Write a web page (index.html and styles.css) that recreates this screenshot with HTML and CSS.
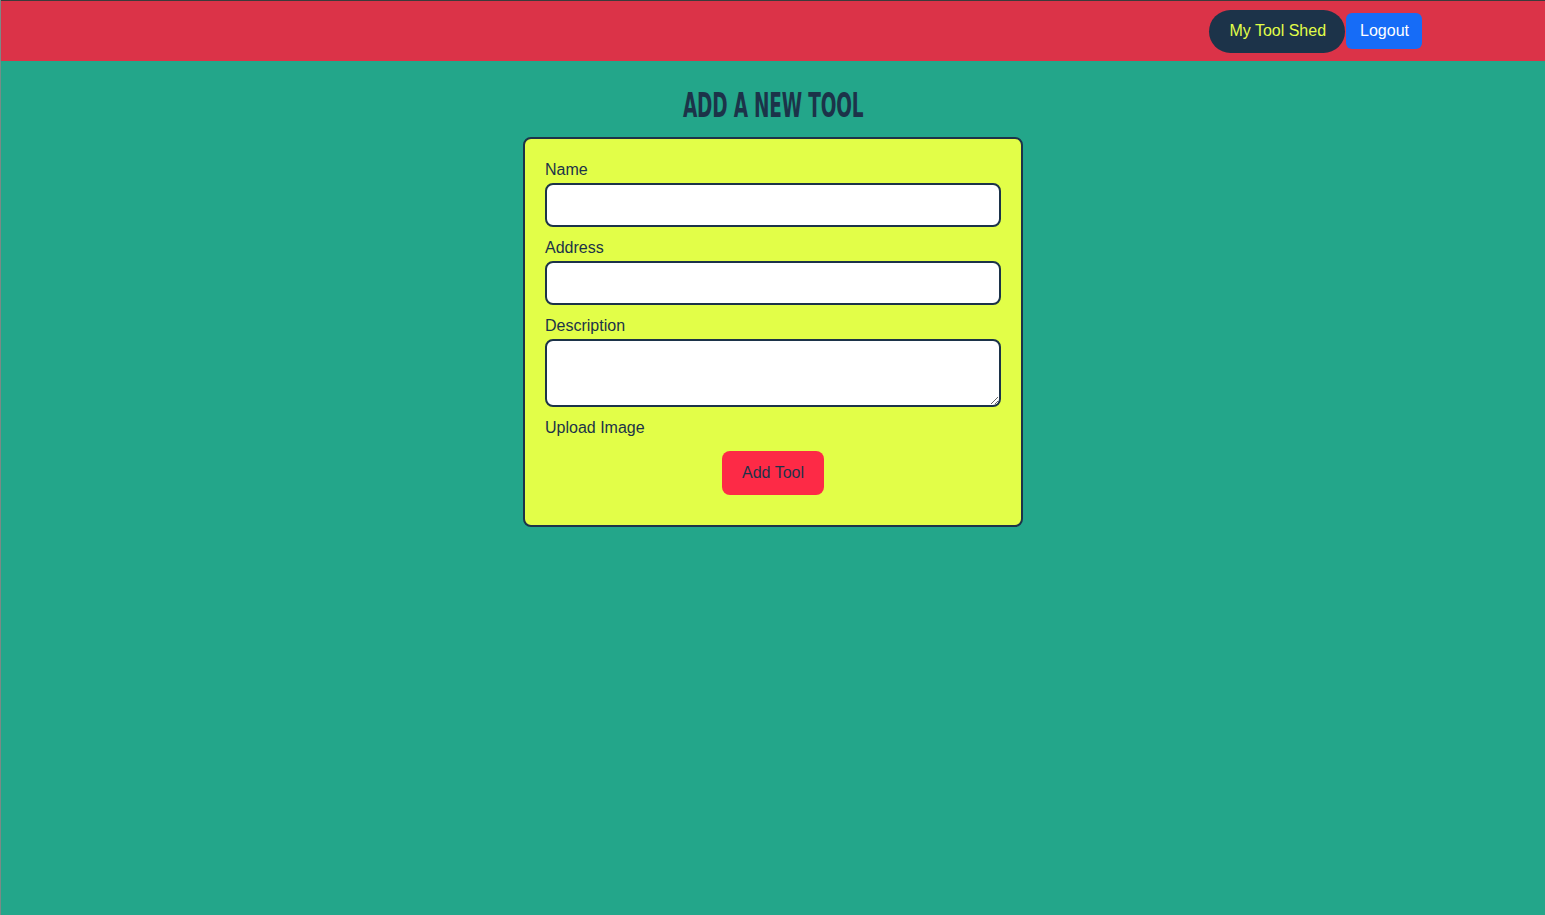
FILE: index.html
```html
<!DOCTYPE html>
<html>
<head>
<meta charset="utf-8">
<title>Add a new tool</title>
<link rel="stylesheet" href="styles.css">
</head>
<body>
<header class="topbar">
  <nav class="nav">
    <a class="nav-shed" href="#">My Tool Shed</a>
    <a class="nav-logout" href="#">Logout</a>
  </nav>
</header>
<main class="main">
  <h1 class="title"><span class="title-text">ADD A NEW TOOL</span></h1>
  <form class="card">
    <label class="label" for="name">Name</label>
    <input class="field" id="name" type="text">
    <label class="label" for="address">Address</label>
    <input class="field" id="address" type="text">
    <label class="label" for="desc">Description</label>
    <textarea class="field area" id="desc"></textarea>
    <label class="label label-upload">Upload Image</label>
    <div class="actions">
      <button class="btn-add" type="button">Add Tool</button>
    </div>
  </form>
</main>
</body>
</html>
```

FILE: styles.css
```css
html, body {
  margin: 0;
  padding: 0;
  height: 100%;
}
body {
  background: #23a68a;
  font-family: "Liberation Sans", Arial, sans-serif;
  color: #1c3349;
  border-left: 1px solid #7a8a86;
  box-sizing: border-box;
}
.topbar {
  background: #db3348;
  border-top: 1px solid #3b3b3b;
  height: 60px;
  display: flex;
  justify-content: flex-end;
  align-items: center;
  padding-right: 123px;
}
.nav {
  display: flex;
  align-items: center;
  gap: 0;
}
.nav a {
  text-decoration: none;
  font-size: 16px;
}
.nav-shed {
  background: #1c3349;
  color: #e2fe48;
  height: 43px;
  padding: 0 19px 0 20px;
  border-radius: 22px;
  display: flex;
  align-items: center;
}
.nav-logout {
  background: #166cf7;
  color: #ffffff;
  height: 36px;
  padding: 0 13px 0 14px;
  margin-left: 1px;
  border-radius: 6px;
  display: flex;
  align-items: center;
}
.main {
  display: flex;
  flex-direction: column;
  align-items: center;
}
.title {
  margin: 27px 0 0;
  height: 49px;
  font-size: 33px;
  line-height: 36px;
  font-family: "DejaVu Sans", sans-serif;
  font-weight: bold;
  color: #1c3349;
}
.title-text {
  display: inline-block;
  transform: scale(0.56, 1.02);
  letter-spacing: -0.3px;
}
.card {
  width: 500px;
  box-sizing: border-box;
  background: #e2fe48;
  border: 2px solid #1c3349;
  border-radius: 8px;
  padding: 20px 20px 30px;
  display: flex;
  flex-direction: column;
}
.label {
  font-size: 16px;
  line-height: 22px;
  margin-bottom: 2px;
}
.field {
  display: block;
  width: 100%;
  box-sizing: border-box;
  height: 44px;
  border: 2px solid #1c3349;
  border-radius: 8px;
  background: #ffffff;
  margin: 0 0 10px;
  font-family: inherit;
  font-size: 16px;
  padding: 6px 10px;
}
.area {
  height: 68px;
  resize: vertical;
}
.label-upload {
  margin-bottom: 12px;
}
.actions {
  display: flex;
  justify-content: center;
}
.btn-add {
  background: #fd2a46;
  color: #1c3349;
  border: none;
  border-radius: 8px;
  width: 102px;
  height: 44px;
  font-family: inherit;
  font-size: 16px;
  padding: 0;
}
```
